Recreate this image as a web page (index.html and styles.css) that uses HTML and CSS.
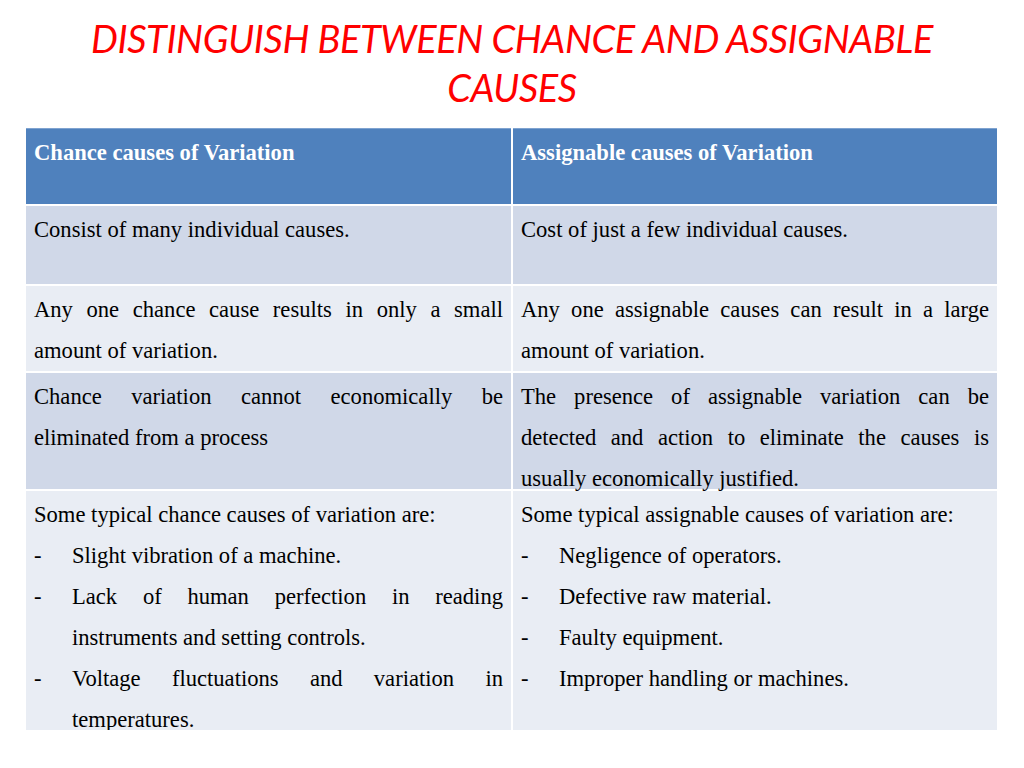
FILE: index.html
```
<!DOCTYPE html>
<html>
<head>
<meta charset="utf-8">
<link rel="stylesheet" href="styles.css">
</head>
<body>
<h1 class="title">DISTINGUISH BETWEEN CHANCE AND ASSIGNABLE<br>CAUSES</h1>
<div class="table">
  <div class="cell head">Chance causes of Variation</div>
  <div class="cell head">Assignable causes of Variation</div>
  <div class="cell dark">Consist of many individual causes.</div>
  <div class="cell dark">Cost of just a few individual causes.</div>
  <div class="cell light"><p class="just">Any one chance cause results in only a small amount of variation.</p></div>
  <div class="cell light"><p class="just">Any one assignable causes can result in a large amount of variation.</p></div>
  <div class="cell dark"><p class="just">Chance variation cannot economically be eliminated from a process</p></div>
  <div class="cell dark"><p class="just">The presence of assignable variation can be detected and action to eliminate the causes is usually economically justified.</p></div>
  <div class="cell light">
    <p>Some typical chance causes of variation are:</p>
    <div class="item"><span class="dash">-</span><span class="itext">Slight vibration of a machine.</span></div>
    <div class="item"><span class="dash">-</span><span class="itext">Lack of human perfection in reading instruments and setting controls.</span></div>
    <div class="item"><span class="dash">-</span><span class="itext">Voltage fluctuations and variation in temperatures.</span></div>
  </div>
  <div class="cell light">
    <p>Some typical assignable causes of variation are:</p>
    <div class="item"><span class="dash">-</span><span class="itext">Negligence of operators.</span></div>
    <div class="item"><span class="dash">-</span><span class="itext">Defective raw material.</span></div>
    <div class="item"><span class="dash">-</span><span class="itext">Faulty equipment.</span></div>
    <div class="item"><span class="dash">-</span><span class="itext">Improper handling or machines.</span></div>
  </div>
</div>
</body>
</html>
```
FILE: styles.css
```
html, body {
  margin: 0;
  padding: 0;
  background: #ffffff;
}
.title {
  margin: 0;
  padding: 14px 0 0 0;
  height: 128px;
  box-sizing: border-box;
  text-align: center;
  font-family: Lato, "Open Sans", sans-serif;
  font-style: italic;
  font-weight: normal;
  font-size: 38px;
  line-height: 49px;
  color: #ff0000;
  letter-spacing: -0.4px;
}
.table {
  margin-left: 26px;
  display: grid;
  grid-template-columns: 485px 484px;
  grid-template-rows: 76px 78px 85px 116px 239px;
  gap: 2px;
  width: 971px;
}
.cell {
  padding: 3px 8px 0 8px;
  font-family: "Liberation Serif", "Times New Roman", serif;
  font-size: 22.6px;
  line-height: 41px;
  color: #000000;
  min-width: 0;
}
.cell p {
  margin: 0;
}
.just {
  text-align: justify;
}
.head {
  background: #4f81bd;
  color: #ffffff;
  font-weight: bold;
  border-top: 1px solid #7fa3d0;
  padding-top: 3px;
}
.dark {
  background: #d0d8e8;
}
.light {
  background: #e9edf4;
}
.item {
  display: flex;
}
.dash {
  flex: 0 0 38px;
}
.itext {
  flex: 1;
  text-align: justify;
}
```
